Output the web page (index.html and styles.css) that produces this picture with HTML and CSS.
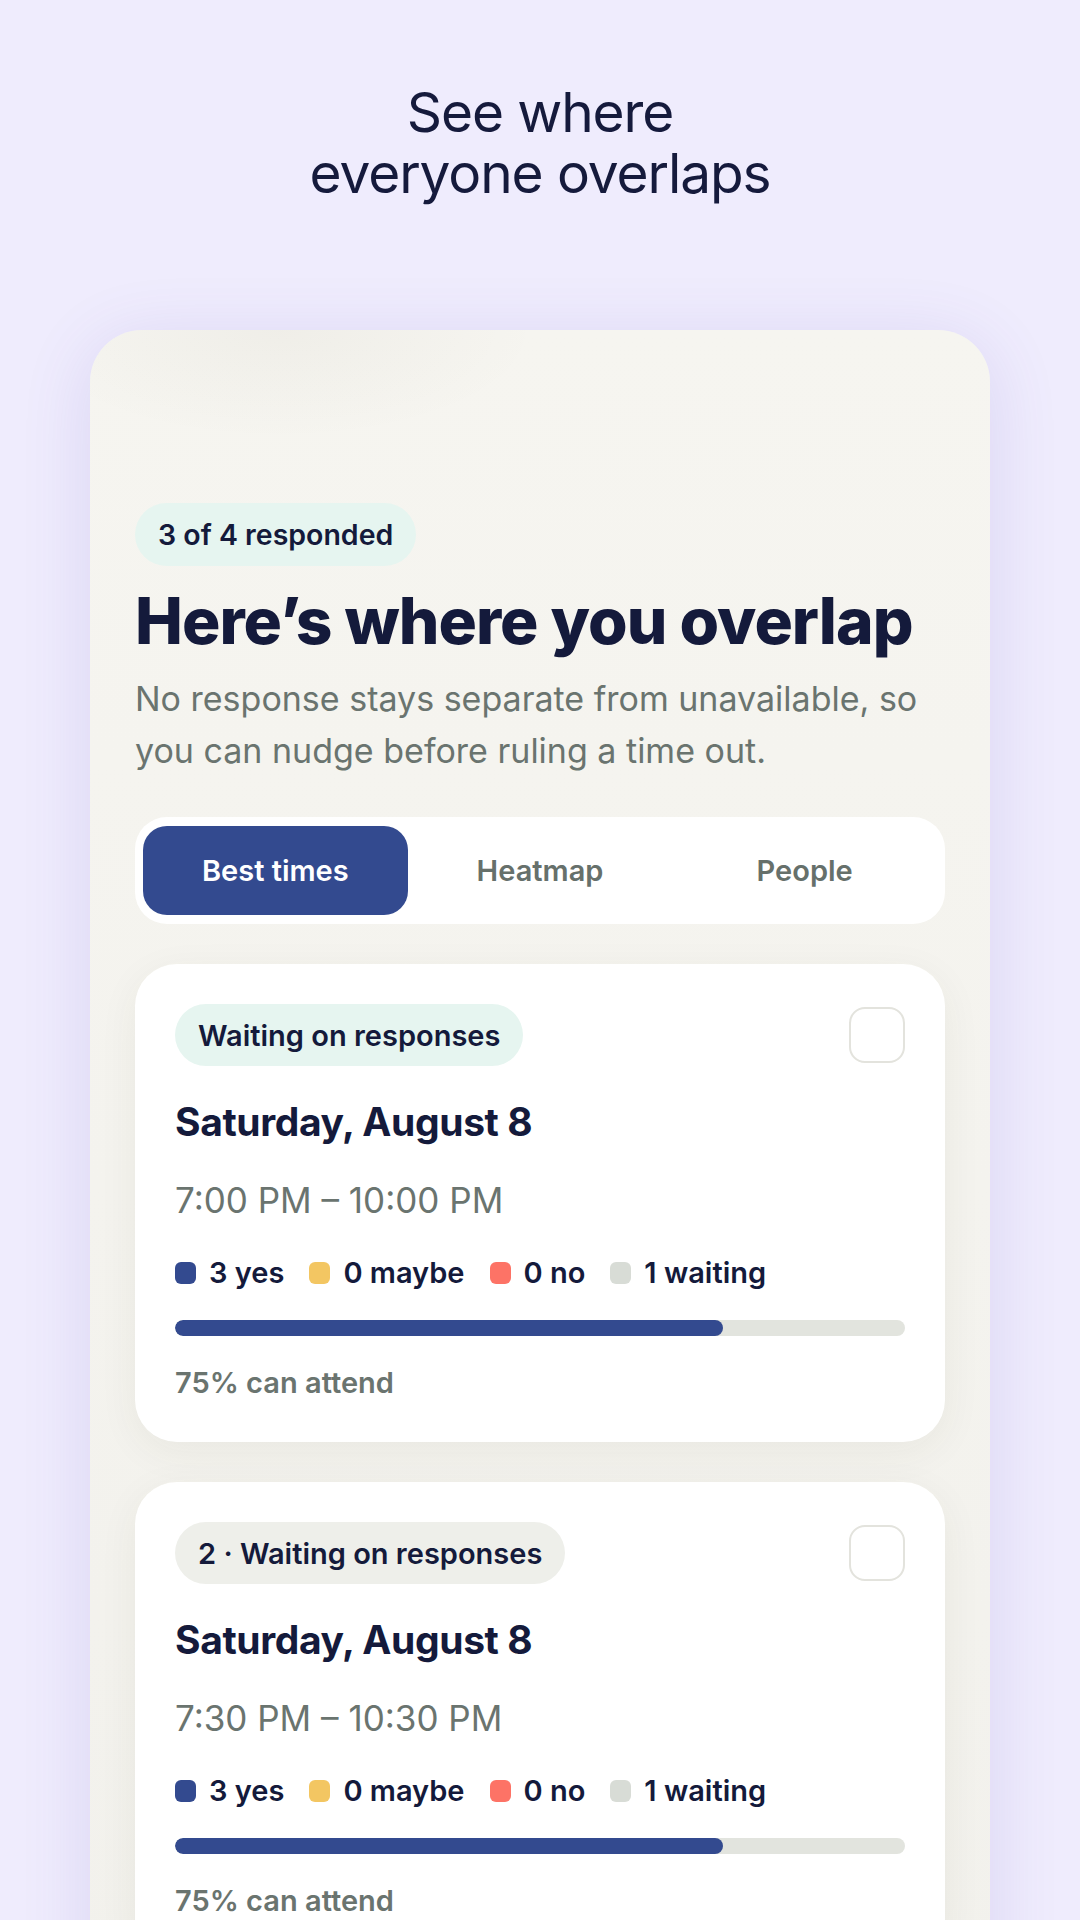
FILE: index.html
```
<!DOCTYPE html>
<html>
<head>
<meta http-equiv="Content-Type" content="text/html; charset=utf-8"/>
<title>Best times</title>
<link rel="stylesheet" href="styles.css">
</head>
<body>

<h1 class="intro">See where<br>everyone overlaps</h1>

<section class="panel">
  <span class="count-pill">3 of 4 responded</span>
  <h2 class="panel-title">Here’s where you overlap</h2>
  <p class="panel-lead">No response stays separate from unavailable, so you can nudge before ruling a time out.</p>

  <nav class="tabs">
    <span class="tab active">Best times</span>
    <span class="tab">Heatmap</span>
    <span class="tab">People</span>
  </nav>

  <article class="slot">
    <div class="slot-head">
      <span class="status">Waiting on responses</span>
      <span class="check"></span>
    </div>
    <h3 class="slot-date">Saturday, August 8</h3>
    <p class="slot-time">7:00 PM – 10:00 PM</p>
    <ul class="legend">
      <li><i class="dot yes"></i>3 yes</li>
      <li><i class="dot maybe"></i>0 maybe</li>
      <li><i class="dot no"></i>0 no</li>
      <li><i class="dot wait"></i>1 waiting</li>
    </ul>
    <div class="bar"><div class="bar-fill" style="width: 75%"></div></div>
    <p class="attend">75% can attend</p>
  </article>

  <article class="slot">
    <div class="slot-head">
      <span class="status muted">2 · Waiting on responses</span>
      <span class="check"></span>
    </div>
    <h3 class="slot-date">Saturday, August 8</h3>
    <p class="slot-time">7:30 PM – 10:30 PM</p>
    <ul class="legend">
      <li><i class="dot yes"></i>3 yes</li>
      <li><i class="dot maybe"></i>0 maybe</li>
      <li><i class="dot no"></i>0 no</li>
      <li><i class="dot wait"></i>1 waiting</li>
    </ul>
    <div class="bar"><div class="bar-fill" style="width: 75%"></div></div>
    <p class="attend">75% can attend</p>
  </article>
</section>

</body>
</html>
```

FILE: styles.css
```
html, body {
  height: 1920px;
  overflow: hidden;
}

body {
  margin: 0;
  background-color: #efecfd;
  font-family: Inter, "Noto Sans", sans-serif;
  color: #141a3b;
}

/* headline above the phone panel */
.intro {
  margin: 82px 0 0;
  font-size: 55px;
  line-height: 61px;
  font-weight: 400;
  letter-spacing: -0.02em;
  text-align: center;
  color: #151a3c;
}

.panel {
  margin: 126px 90px 0;
  padding: 173px 45px 80px;
  border-radius: 52px;
  background:
    radial-gradient(ellipse 260px 110px at 190px 0, rgba(60, 50, 20, 0.035), transparent),
    linear-gradient(#f6f5f0, #f2f1ec);
  box-shadow: 0 12px 70px rgba(90, 70, 180, 0.14);
}

.count-pill {
  display: inline-flex;
  align-items: center;
  height: 63px;
  padding: 0 23px;
  border-radius: 32px;
  background-color: #e6f5f0;
  font-size: 28.5px;
  font-weight: 600;
}

.panel-title {
  margin: 20px 0 0;
  font-size: 64px;
  line-height: 69px;
  font-weight: 800;
  letter-spacing: -0.015em;
}

.panel-lead {
  margin: 18px 0 0;
  font-size: 34px;
  line-height: 52px;
  color: #6a746f;
}

/* segmented control */
.tabs {
  display: grid;
  grid-template-columns: repeat(3, 1fr);
  margin-top: 40px;
  padding: 9px 8px;
  border-radius: 32px;
  background-color: #fff;
}

.tab {
  display: flex;
  align-items: center;
  justify-content: center;
  height: 89px;
  border-radius: 24px;
  font-size: 29px;
  font-weight: 600;
  color: #66706b;
}

.tab.active {
  background-color: #334a8f;
  color: #fff;
}

/* time slot cards */
.slot {
  margin-top: 40px;
  padding: 40px 40px 42px;
  border-radius: 42px;
  background-color: #fff;
  box-shadow: 0 10px 40px rgba(70, 60, 30, 0.06);
}

.slot-head {
  display: flex;
  align-items: center;
  justify-content: space-between;
}

.status {
  display: inline-flex;
  align-items: center;
  height: 62px;
  padding: 0 23px;
  border-radius: 31px;
  background-color: #e6f5f0;
  font-size: 29px;
  font-weight: 600;
}

.status.muted {
  background-color: #eeefea;
}

.check {
  width: 52px;
  height: 52px;
  border: 2px solid #e3e3dd;
  border-radius: 16px;
}

.slot-date {
  margin: 32px 0 0;
  font-size: 39px;
  line-height: 48px;
  font-weight: 700;
  letter-spacing: -0.01em;
}

.slot-time {
  margin: 32px 0 0;
  font-size: 35px;
  line-height: 44px;
  color: #6a746f;
}

.legend {
  display: flex;
  gap: 25px;
  margin: 35px 0 0;
  padding: 0;
  list-style: none;
  font-size: 29px;
  line-height: 32px;
  font-weight: 600;
}

.legend li {
  display: flex;
  align-items: center;
  gap: 13px;
}

.dot {
  width: 21px;
  height: 22px;
  border-radius: 6px;
}

.dot.yes { background-color: #334a8f; }
.dot.maybe { background-color: #f3c662; }
.dot.no { background-color: #fd7366; }
.dot.wait { background-color: #d8dcd6; }

.bar {
  height: 16px;
  margin-top: 31px;
  border-radius: 8px;
  background-color: #e2e4de;
  overflow: hidden;
}

.bar-fill {
  height: 100%;
  border-radius: 8px;
  background-color: #334a8f;
}

.attend {
  margin: 30px 0 0;
  font-size: 29px;
  line-height: 34px;
  font-weight: 600;
  color: #6a746f;
}
```
